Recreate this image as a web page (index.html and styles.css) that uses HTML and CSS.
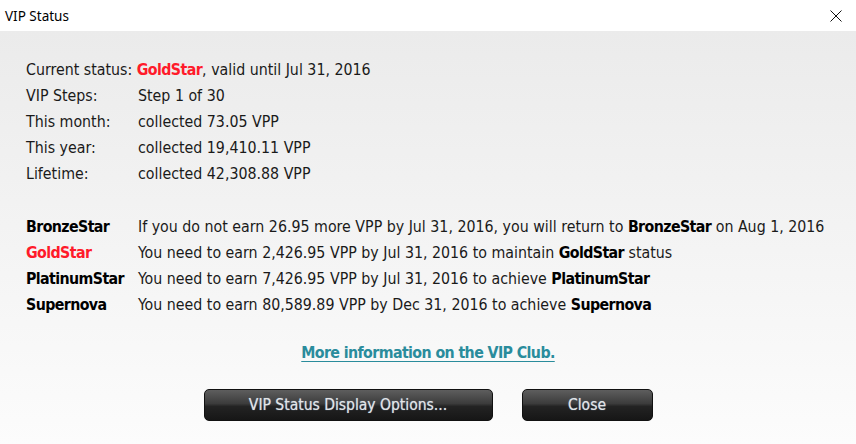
FILE: index.html
```html
<!DOCTYPE html>
<html>
<head>
<meta charset="utf-8">
<link rel="stylesheet" href="styles.css">
</head>
<body>
<div class="window">
  <div class="titlebar">
    <span class="title">VIP Status</span>
    <svg class="close-x" width="12" height="12" viewBox="0 0 12 12"><path d="M0.5 0.5 L11.5 11.5 M11.5 0.5 L0.5 11.5" stroke="#111" stroke-width="1"/></svg>
  </div>
  <div class="content">
    <div class="grid info">
      <div class="row"><span>Current status: <b class="red">GoldStar</b>, valid until Jul 31, 2016</span></div>
      <div class="row"><span class="lbl">VIP Steps:</span><span>Step 1 of 30</span></div>
      <div class="row"><span class="lbl">This month:</span><span>collected 73.05 VPP</span></div>
      <div class="row"><span class="lbl">This year:</span><span>collected 19,410.11 VPP</span></div>
      <div class="row"><span class="lbl">Lifetime:</span><span>collected 42,308.88 VPP</span></div>
    </div>
    <div class="grid levels">
      <div class="row"><b class="lbl">BronzeStar</b><span>If you do not earn 26.95 more VPP by Jul 31, 2016, you will return to <b>BronzeStar</b> on Aug 1, 2016</span></div>
      <div class="row"><b class="lbl red">GoldStar</b><span>You need to earn 2,426.95 VPP by Jul 31, 2016 to maintain <b>GoldStar</b> status</span></div>
      <div class="row"><b class="lbl">PlatinumStar</b><span>You need to earn 7,426.95 VPP by Jul 31, 2016 to achieve <b>PlatinumStar</b></span></div>
      <div class="row"><b class="lbl">Supernova</b><span>You need to earn 80,589.89 VPP by Dec 31, 2016 to achieve <b>Supernova</b></span></div>
    </div>
    <div class="linkrow"><a class="more" href="#">More information on the VIP Club.</a></div>
    <div class="buttons">
      <button class="btn wide">VIP Status Display Options...</button>
      <button class="btn narrow">Close</button>
    </div>
  </div>
</div>
</body>
</html>
```
FILE: styles.css
```css
* { box-sizing: border-box; }
html, body { margin: 0; padding: 0; }
body {
  width: 856px;
  height: 444px;
  overflow: hidden;
  font-family: "DejaVu Sans Condensed", "DejaVu Sans", sans-serif;
  font-stretch: condensed;
  color: #1a1a1a;
}
.window { width: 856px; height: 444px; display: flex; flex-direction: column; }
.titlebar {
  height: 31px;
  background: #fff;
  display: flex;
  align-items: center;
  justify-content: space-between;
  padding: 0 14px 0 5px;
}
.title { font-family: "Noto Sans", "Liberation Sans", sans-serif; font-stretch: normal; font-size: 13.5px; color: #000; }
.close-x { display: block; }
.content {
  flex: 1;
  background: linear-gradient(#ebebeb, #fcfcfc);
  padding: 25px 0 0 26px;
  font-size: 15.8px;
}
.row { display: flex; height: 26px; align-items: center; white-space: nowrap; }
.lbl { width: 112px; flex: none; }
.levels { margin-top: 27px; }
b { font-weight: bold; color: #000; letter-spacing: -0.6px; }
.red { color: #ff1a2a; }
.linkrow { display: flex; justify-content: center; padding-right: 26px; margin-top: 26px; }
.more { color: #2a8c9c; font-weight: bold; letter-spacing: -0.6px; text-decoration: underline; text-underline-offset: 3px; }
.buttons { display: flex; justify-content: center; gap: 29px; margin-top: 27px; padding-right: 26px; }
.btn {
  height: 32px;
  border: 1px solid #111;
  border-radius: 5px;
  background: linear-gradient(#5e5e5e 0%, #3c3c3c 45%, #232323 55%, #161616 100%);
  color: #e4e4e4;
  font-family: inherit;
  font-stretch: condensed;
  font-size: 15.5px;
  text-shadow: 0 0 1px #8ac;
  padding: 0;
}
.wide { width: 289px; }
.narrow { width: 131px; }
```
